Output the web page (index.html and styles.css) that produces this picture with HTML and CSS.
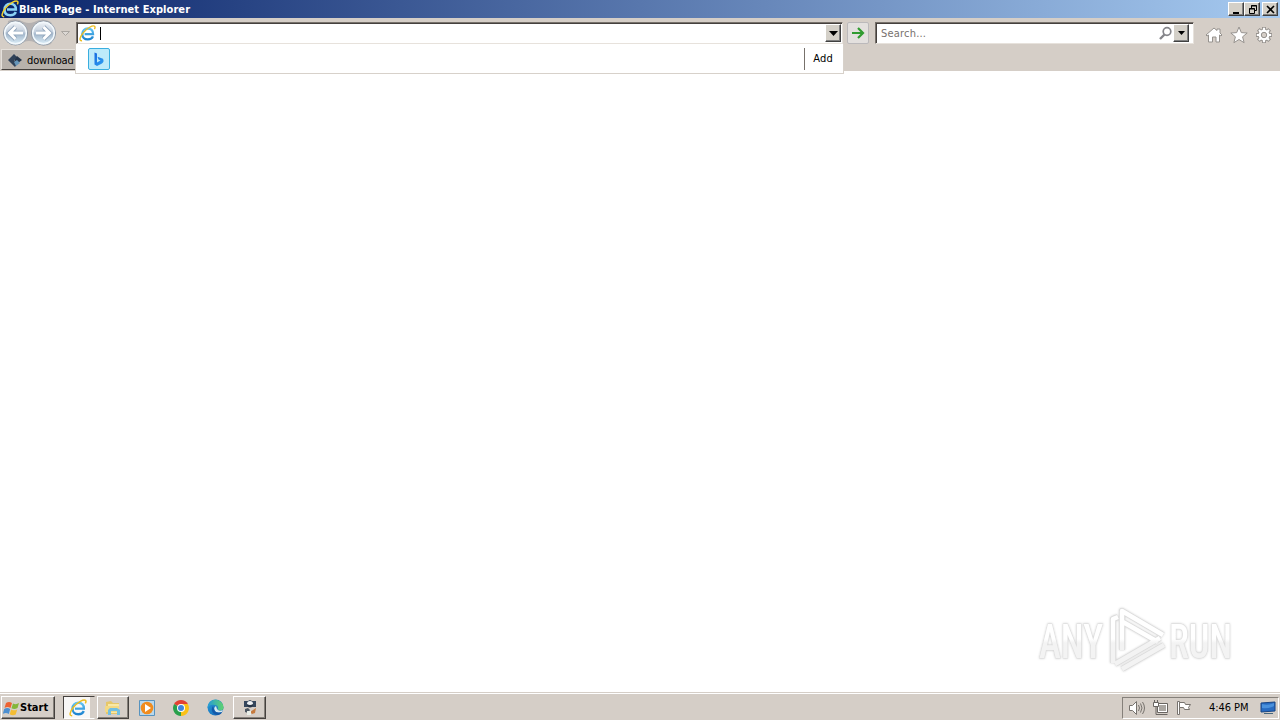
FILE: index.html
```
<!DOCTYPE html>
<html lang="en">
<head>
  <meta charset="utf-8">
  <title>Blank Page - Internet Explorer</title>
  <link rel="stylesheet" href="styles.css">
</head>
<body>
  <!-- shared icon shapes -->
  <svg class="defs" width="0" height="0">
    <defs>
      <linearGradient id="blue" x1="0" y1="0" x2="0" y2="1"><stop offset="0" stop-color="#65c4f3"/><stop offset="1" stop-color="#1d83cf"/></linearGradient>
      <linearGradient id="orb" x1="0" y1="0" x2="0" y2="1"><stop offset="0" stop-color="#f5f7fa"/><stop offset=".45" stop-color="#c3cfdd"/><stop offset=".55" stop-color="#a5b9cd"/><stop offset="1" stop-color="#e1f3fc"/></linearGradient>
      <linearGradient id="edge" x1="0" y1="0" x2="1" y2="1"><stop offset="0" stop-color="#249bd8"/><stop offset="1" stop-color="#1763b4"/></linearGradient>
      <linearGradient id="edgetop" x1="0" y1="0" x2="1" y2="0"><stop offset="0" stop-color="#249bd8"/><stop offset="1" stop-color="#60d36d"/></linearGradient>
      <linearGradient id="bing" x1="0" y1="0" x2="1" y2="1"><stop offset="0" stop-color="#1769e0"/><stop offset="1" stop-color="#2fa0f2"/></linearGradient>
      <linearGradient id="fade" gradientUnits="userSpaceOnUse" x1="0" y1="36" x2="0" y2="40"><stop offset="0" stop-color="#fff"/><stop offset="1" stop-color="#f3f3f3"/></linearGradient>
      <symbol id="ie" viewBox="0 0 18 18">
        <path d="M14.8 12C13.800 14.400 11.800 15.300 9.300 15.300 5.700 15.300 3.500 13 3.500 9.500S5.900 3.700 9.300 3.700c3.600 0 5.800 2.300 5.600 5.900H6" fill="none" stroke="#fff" stroke-width="3.200"/>
        <path d="M14.8 12C13.800 14.400 11.800 15.300 9.300 15.300 5.700 15.300 3.500 13 3.500 9.500S5.900 3.700 9.300 3.700c3.600 0 5.800 2.300 5.600 5.900H6" fill="none" stroke="url(#blue)" stroke-width="2.400"/>
        <path d="M3.200 16.600C-.2 17 .8 12.800 4.400 8.300 8.500 3.300 14.800-.2 16.500 1.400c.7.700.4 2-.2 3" fill="none" stroke="#edbd20" stroke-width="1.500"/>
      </symbol>
      <symbol id="ie-title" viewBox="0 0 18 18">
        <path d="M14.8 12C13.800 14.400 11.800 15.300 9.300 15.300 5.700 15.300 3.500 13 3.500 9.500S5.900 3.700 9.300 3.700c3.600 0 5.800 2.300 5.600 5.900H6" fill="none" stroke="#8bd2f5" stroke-width="2.500"/>
        <path d="M3.200 16.600C-.2 17 .8 12.800 4.400 8.300 8.500 3.300 14.800-.2 16.500 1.400c.7.700.4 2-.2 3" fill="none" stroke="#f2d02c" stroke-width="1.500"/>
      </symbol>
    </defs>
  </svg>

  <div class="titlebar">
    <svg class="title-icon" width="18" height="18"><use href="#ie-title"/></svg>
    <span class="title">Blank Page - Internet Explorer</span>
    <div class="window-buttons">
      <button class="win-btn"><svg width="13" height="11"><path d="M3 8h6v2H3z"/></svg></button>
      <button class="win-btn"><svg width="13" height="11" fill="none" stroke="#000"><path d="M5.500 4V1.500h5v5H9M5 2h6M3.500 4.500h5v5h-5zM3 5h6"/></svg></button>
      <button class="win-btn close"><svg width="13" height="11" fill="none" stroke="#000" stroke-width="1.600"><path d="M3 2l7 7M10 2L3 9"/></svg></button>
    </div>
  </div>

  <div class="navbar">
    <svg class="nav-orbs" width="74" height="29">
      <path d="M8 3Q15-1 24 4q5 2 10 0 9-5 17 0l4 11-4 11q-9 4-17-2-5-2-10 0-9 6-17 0z" fill="#b5b2b2"/>
      <circle cx="15.500" cy="15" r="12" fill="url(#orb)" stroke="#8b96a3"/>
      <circle cx="43.500" cy="15" r="12" fill="url(#orb)" stroke="#8b96a3"/>
      <circle cx="15.500" cy="15" r="10.800" fill="none" stroke="#f2f8fc" stroke-width="1.500"/>
      <circle cx="43.500" cy="15" r="10.800" fill="none" stroke="#f2f8fc" stroke-width="1.500"/>
      <g fill="none" stroke="#8fa4bb" stroke-width="4.600"><path d="M23 15H10M15.500 9l-6 6 6 6M36 15h13M43.500 9l6 6-6 6"/></g>
      <g fill="none" stroke="#fff" stroke-width="3"><path d="M23 15H10M15.500 9l-6 6 6 6M36 15h13M43.500 9l6 6-6 6"/></g>
      <path d="M61.500 13.500h8l-4 4z" fill="#ddd9d5" stroke="#aaa6a1"/>
    </svg>
    <div class="address">
      <svg width="17" height="17"><use href="#ie"/></svg>
      <span class="caret"></span>
      <button class="drop-btn"><svg width="9" height="5"><path d="M0 0h9L4.500 5z"/></svg></button>
    </div>
    <button class="go"><svg width="14" height="12" fill="none" stroke="#309b30" stroke-width="2.200"><path d="M1 6h11M7 1l5 5-5 5"/></svg></button>
    <div class="search">
      <span>Search...</span>
      <svg width="15" height="15" fill="none" stroke="#85858a"><circle cx="9" cy="5.500" r="3.800" stroke-width="1.700"/><path d="M6.500 8.500L2 13" stroke-width="2.400"/></svg>
      <button class="drop-btn"><svg width="7" height="4"><path d="M0 0h7L3.500 4z"/></svg></button>
    </div>
    <div class="tools">
      <svg width="18" height="18"><path d="M1 9l8-7 3 2.500V3h3v4l2 2-1 1-1.500-1v7H11v-5H7.500v5h-4V9L2 10z" fill="#fff" stroke="#96928e"/></svg>
      <svg width="18" height="18"><path d="M9 1l2.300 5.600 5.900.4-4.600 3.800 1.500 5.900L9 13.500l-5.100 3.200 1.500-5.900L.8 7l5.900-.4z" fill="#fff" stroke="#96928e"/></svg>
      <svg width="18" height="18">
        <g stroke="#96928e" stroke-width="4"><path d="M9 1v16M1 9h16M3.300 3.300l11.400 11.400M14.700 3.300L3.300 14.700"/></g>
        <circle cx="9" cy="9" r="6.300" fill="#96928e"/>
        <g stroke="#fff" stroke-width="2.200"><path d="M9 1.800v14.400M1.800 9h14.400M4 4l10 10M14 4L4 14"/></g>
        <circle cx="9" cy="9" r="5.400" fill="#fff"/>
        <circle cx="9" cy="9" r="2.700" fill="#d5cec7" stroke="#96928e"/>
      </svg>
    </div>
  </div>

  <div class="tabs">
    <div class="tab">
      <svg width="16" height="16"><path d="M1 8l6-6 3 3-3 3 3 4-2 3z" fill="#2f4158"/><path d="M10 4l5 4-4 3-4-3z" fill="#233349"/><path d="M7 10l3-2 3 3-4 3z" fill="#6595b9"/></svg>
      <span>download</span>
    </div>
  </div>

  <div class="suggestions">
    <div class="bing"><svg width="14" height="16"><path d="M2.500 1.500l2.500 1v9l3.500-2-2-1-1-2.700 5.500 2q1.500 3-1 4.700L5 15l-2.500-1.500z" fill="url(#bing)"/></svg></div>
    <span class="add">Add</span>
  </div>

  <div class="page">
    <svg class="watermark" width="220" height="74" viewBox="0 0 220 74">
      <g class="mark" fill="none" stroke="#dcdcdc" stroke-width="6" stroke-linejoin="round">
        <path d="M84 60V16l5-2M86 61l45-26M93 66l42-24M93 47V8l41 24M94 19l35 20"/>
      </g>
      <g fill="none" stroke="url(#fade)" stroke-width="4.400" stroke-linejoin="round">
        <path d="M84 60V16l5-2M86 61l45-26M93 66l42-24M93 47V8l41 24M94 19l35 20"/>
      </g>
      <text x="10" y="55" textLength="64" lengthAdjust="spacingAndGlyphs">ANY</text>
      <text x="140" y="55" textLength="63" lengthAdjust="spacingAndGlyphs">RUN</text>
    </svg>
  </div>

  <div class="taskbar">
    <button class="start">
      <svg width="17" height="16"><path d="M3 3q3-2 6 0L7.500 8q-3-2-6 0z" fill="#ed6332"/><path d="M10 3.500q3 1.500 6-.5l-1.500 5q-3 2-6 .3z" fill="#84b63a"/><path d="M1.200 9q3-2 6 0l-1.400 5q-3-2-6 0z" fill="#4d8fd0"/><path d="M8.200 9.500q3 1.700 6 0l-1.500 5q-3 1.700-6-.2z" fill="#f4bd33"/></svg>
      <span>Start</span>
    </button>
    <div class="task pressed"><svg width="18" height="18"><use href="#ie"/></svg></div>
    <div class="task raised">
      <svg width="18" height="18"><path d="M2 3l5-1 2 2h6v11H2z" fill="#e6c769"/><path d="M4 5h11v9H4z" fill="#f9e8a5"/><path d="M1 7h14v6H1z" fill="#f3d983"/><path d="M4 16v-5l2-2h7l3 2v5h-3v-4H7v4z" fill="#72bfe2"/></svg>
    </div>
    <div class="task">
      <svg width="16" height="16"><path d="M.5.500h15v15H.5z" fill="#b9d8ec" stroke="#5793bf"/><circle cx="8" cy="8" r="6.300" fill="#f08c1e"/><path d="M6 4l6 4-6 4z" fill="#fff"/></svg>
    </div>
    <div class="task">
      <svg width="16" height="16"><path d="M8 8L1.100 4A8 8 0 0 1 14.900 4z" fill="#e34133"/><path d="M8 8l6.900-4A8 8 0 0 1 8 16z" fill="#fbc116"/><path d="M8 8v8A8 8 0 0 1 1.100 4z" fill="#29a04c"/><path d="M8 4h7l-4 6z" fill="#fbc116"/><circle cx="8" cy="8" r="4" fill="#fff"/><circle cx="8" cy="8" r="3" fill="#4285db"/></svg>
    </div>
    <div class="task">
      <svg width="17" height="17"><circle cx="8.500" cy="8.500" r="8" fill="url(#edge)"/><path d="M.7 7A8 8 0 0 1 16.500 9c0 3-5 3-6 1 1-2 0-4-3-4-3-.5-5 0-6.800 3z" fill="url(#edgetop)"/><path d="M9 7q-3 2-1 5t7 1l1-2q-4 2-6-1z" fill="#d7e9ef"/><path d="M6 7q-3 4 1 8l3 1q4 0 5-3-7 2-8-3z" fill="#145aaa"/></svg>
    </div>
    <div class="task raised app">
      <svg width="16" height="17"><path d="M2 2h4l2-1 2 1h4v6H2z" fill="#34465c"/><circle cx="8" cy="5" r="3" fill="#eff2f5"/><path d="M5 5q3 2 6 0v2q-3 3-6 0z" fill="#263446"/><path d="M3 10l3-1 2 2-2 3-3-1z" fill="#4b5661"/><path d="M8 13l6-4-1 5-3 1z" fill="#c77b3e"/><path d="M5 12h4v4H5z" fill="#e9eee7"/></svg>
    </div>
    <div class="tray">
      <svg width="17" height="16" fill="none" stroke="#77736e"><path d="M1.500 5.500h3l4-4v13l-4-4h-3z" fill="#fff"/><path d="M10.500 5q2 3 0 6M12.500 3.500q3 4.500 0 9M14.500 2q4 6 0 12"/></svg>
      <svg class="network" width="17" height="16" fill="none" stroke="#696561"><path d="M5.500 3.500h10v9h-10zM7.500 14.500h8" fill="#fff"/><path d="M7 5h7v6H7z" fill="#aaa6a1" stroke="none"/><path d="M1.500 2.500h5v4h-5zM2.500 0v2M5.500 0v2" fill="#fff"/><path d="M4 7v7.500h4"/></svg>
      <svg class="flag" width="17" height="16" fill="#fff" stroke="#77736e"><path d="M1.500 1.500h2v13h-2z"/><path d="M3.500 2.500h5l1 2h5l-2 3 1 2h-5l-1-2h-4z"/></svg>
      <span class="clock">4:46 PM</span>
      <svg class="desktop" width="16" height="14"><path d="M1 2l14-1v9l-14 1z" fill="#286bc1" stroke="#194583"/><path d="M2 3q6 2 12-1v3q-6 3-12 2z" fill="#4a91dc"/><path d="M4 12h9v1H4z" fill="#47677e"/></svg>
    </div>
  </div>
</body>
</html>
```
FILE: styles.css
```
* {
  box-sizing: border-box;
}

body {
  display: flex;
  flex-direction: column;
  width: 1280px;
  height: 720px;
  margin: 0;
  overflow: hidden;
  position: relative;
  background: #fff;
  color: #000;
  font-family: "DejaVu Sans Condensed", "DejaVu Sans", sans-serif;
  font-size: 11px;
  font-stretch: condensed;
}

svg {
  display: block;
  flex-shrink: 0;
}

.defs {
  position: absolute;
}

button {
  padding: 0;
  font: inherit;
  color: #000;
}

.titlebar {
  display: flex;
  align-items: center;
  height: 18px;
  flex-shrink: 0;
  padding: 0 2px 0 1px;
  background: linear-gradient(to right, #0a246a, #a6caf0);
}

.title {
  color: #fff;
  font-weight: bold;
  letter-spacing: 0.07px;
  white-space: nowrap;
}

.window-buttons {
  display: flex;
  margin-left: auto;
}

.win-btn,
.drop-btn {
  display: flex;
  align-items: center;
  justify-content: center;
  background: #d4d0c8;
  border: 1px solid;
  border-color: #fff #404040 #404040 #fff;
  box-shadow: inset -1px -1px #808080;
}

.win-btn {
  width: 16px;
  height: 14px;
}

.close {
  margin-left: 2px;
}

.navbar {
  display: flex;
  align-items: flex-start;
  height: 30px;
  flex-shrink: 0;
  background: #d5cec7;
}

.address,
.search {
  display: flex;
  align-items: center;
  height: 22px;
  margin-top: 4px;
  background: #fff;
  border: 1px solid;
  border-color: #77716b #e7e2dc #e7e2dc #77716b;
  box-shadow: inset 1px 1px #45403d;
}

.address {
  width: 767px;
  margin-left: 2px;
  padding: 1px 1px 1px 2px;
}

.caret {
  width: 1px;
  height: 13px;
  margin-left: 4px;
  background: #000;
}

.drop-btn {
  width: 16px;
  height: 18px;
  margin-left: auto;
}

.go {
  display: flex;
  align-items: center;
  justify-content: center;
  width: 22px;
  height: 22px;
  margin: 4px 0 0 4px;
  background: #e3e0de;
  border: 1px solid #bbb9bb;
  border-radius: 2px;
}

.search {
  width: 319px;
  margin-left: 6px;
  padding: 1px 4px 1px 5px;
  color: #77716e;
}

.search span {
  margin-right: auto;
  padding-top: 1px;
  letter-spacing: .2px;
}

.search .drop-btn {
  margin-left: 0;
}

.tools {
  display: flex;
  gap: 7px;
  margin: 8px 0 0 11px;
}

.tabs {
  height: 23px;
  flex-shrink: 0;
  padding: 1px 0 0 1px;
  background: #d5cec7;
}

.tab {
  display: flex;
  align-items: center;
  width: 120px;
  height: 21px;
  padding-left: 5px;
  gap: 4px;
  background: #b8b2ac;
  border: 1px solid;
  border-color: #e5e1dc #45413e #45413e #e5e1dc;
}

.tab span {
  padding-top: 1px;
  letter-spacing: -0.15px;
}

.suggestions {
  display: flex;
  align-items: center;
  position: absolute;
  left: 75px;
  top: 44px;
  width: 769px;
  height: 30px;
  padding: 0 10px 0 13px;
  background: #fff;
  border: 1px solid #d7d1ca;
  border-top: 0;
}

.bing {
  display: flex;
  align-items: center;
  justify-content: center;
  width: 22px;
  height: 22px;
  margin-left: -1px;
  background: #bdeafa;
  border: 1px solid #39aedf;
  border-radius: 2px;
}

.add {
  margin-left: auto;
  padding-left: 8px;
  height: 22px;
  line-height: 22px;
  letter-spacing: .2px;
  border-left: 1px solid #77716b;
}

.page {
  display: flex;
  flex: 1;
  align-items: flex-end;
  justify-content: flex-end;
  padding: 0 31px 15px 0;
}

.watermark {
  overflow: visible;
}

.watermark text {
  fill: url(#fade);
  stroke: #dedede;
  stroke-width: 1px;
  paint-order: stroke;
  font-family: Roboto, "Liberation Sans", sans-serif;
  font-size: 48px;
  font-weight: 500;
  filter: drop-shadow(0 0 1px #ccc);
}

.mark {
  filter: drop-shadow(0 0 1px #ccc);
}

.taskbar {
  display: flex;
  align-items: center;
  height: 28px;
  flex-shrink: 0;
  padding: 2px 1px 0 1px;
  background: #d5cec7;
  border-top: 1px solid #d5cec7;
  box-shadow: inset 0 1px #fff;
}

.start,
.raised {
  border: 1px solid;
  border-color: #fff #45413e #45413e #fff;
  box-shadow: inset -1px -1px #85807a;
}

.start {
  display: flex;
  align-items: center;
  width: 54px;
  height: 23px;
  padding-left: 1px;
  margin-right: 8px;
  background: #d5cec7;
  font-weight: bold;
  letter-spacing: 0;
}

.task {
  display: flex;
  align-items: center;
  justify-content: center;
  width: 32px;
  height: 23px;
  margin-right: 2px;
}

.pressed {
  padding-right: 3px;
  background: linear-gradient(to right, #f8f7f6 26px, #d5cec7 26px);
  border: 1px solid;
  border-color: #45413e #d5cec7 #fff #45413e;
}

.app {
  width: 33px;
}

.tray {
  display: flex;
  align-items: center;
  width: 157px;
  height: 22px;
  margin-left: auto;
  padding-left: 5px;
  border: 1px solid;
  border-color: #85807a #fff #fff #85807a;
}

.network {
  margin-left: 7px;
}

.flag {
  margin-left: 7px;
}

.clock {
  margin-left: 16px;
  letter-spacing: -0.05px;
  white-space: nowrap;
}

.desktop {
  margin: 0 2px 0 auto;
}
```
